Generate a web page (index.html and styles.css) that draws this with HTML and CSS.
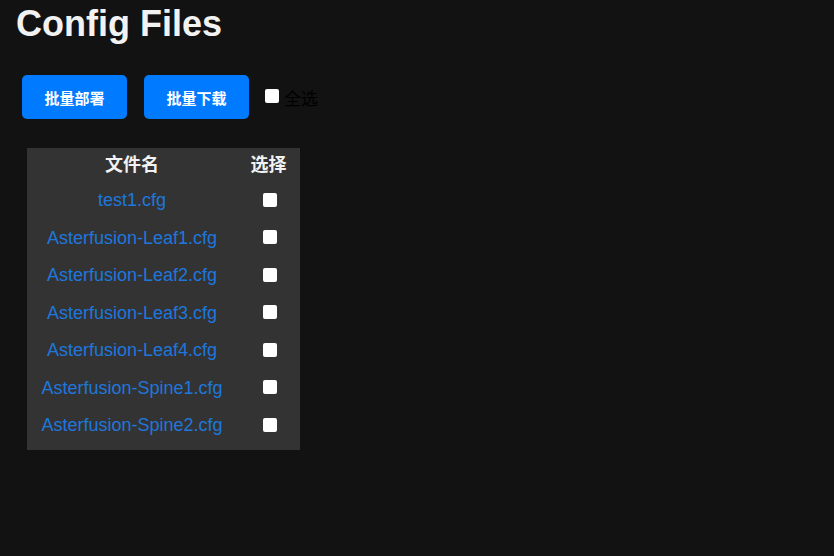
FILE: index.html
```html
<!DOCTYPE html>
<html lang="zh-CN">
<head>
<meta charset="utf-8">
<title>Config Files</title>
<link rel="stylesheet" href="styles.css">
</head>
<body>
<h1 class="title">Config Files</h1>
<div class="toolbar">
  <button class="btn">批量部署</button>
  <button class="btn">批量下载</button>
  <label class="select-all"><input type="checkbox" class="chk"><span>全选</span></label>
</div>
<div class="files-box">
<table class="files">
  <thead>
    <tr><th class="col-name">文件名</th><th class="col-sel">选择</th></tr>
  </thead>
  <tbody>
    <tr><td class="col-name"><a href="#">test1.cfg</a></td><td class="col-sel"><input type="checkbox" class="chk"></td></tr>
    <tr><td class="col-name"><a href="#">Asterfusion-Leaf1.cfg</a></td><td class="col-sel"><input type="checkbox" class="chk"></td></tr>
    <tr><td class="col-name"><a href="#">Asterfusion-Leaf2.cfg</a></td><td class="col-sel"><input type="checkbox" class="chk"></td></tr>
    <tr><td class="col-name"><a href="#">Asterfusion-Leaf3.cfg</a></td><td class="col-sel"><input type="checkbox" class="chk"></td></tr>
    <tr><td class="col-name"><a href="#">Asterfusion-Leaf4.cfg</a></td><td class="col-sel"><input type="checkbox" class="chk"></td></tr>
    <tr><td class="col-name"><a href="#">Asterfusion-Spine1.cfg</a></td><td class="col-sel"><input type="checkbox" class="chk"></td></tr>
    <tr><td class="col-name"><a href="#">Asterfusion-Spine2.cfg</a></td><td class="col-sel"><input type="checkbox" class="chk"></td></tr>
  </tbody>
</table>
</div>
</body>
</html>
```
FILE: styles.css
```css
html, body {
  background: #121212;
}
body {
  margin: 0;
  padding: 0 16px;
  font-family: "Liberation Sans", "Noto Sans CJK SC", Arial, sans-serif;
  color: #000;
}
.title {
  margin: 3px 0 0;
  font-size: 36px;
  font-weight: bold;
  color: #f2f2f2;
  line-height: 41px;
}
.toolbar {
  display: flex;
  align-items: center;
  margin-top: 31px;
  padding-left: 6px;
}
.btn {
  width: 105px;
  height: 44px;
  margin-right: 17px;
  border: none;
  border-radius: 5px;
  background: #007bff;
  color: #fff;
  font-family: "Noto Sans CJK SC", sans-serif;
  font-size: 15px;
  font-weight: bold;
  padding: 0;
}
.btn + .btn {
  margin-right: 16px;
}
.select-all {
  display: flex;
  align-items: center;
  font-family: "Noto Sans CJK SC", sans-serif;
  font-size: 17px;
  color: #000;
  height: 16px;
}
.select-all .chk {
  margin: 0 5px 2px 0;
}
.chk {
  appearance: none;
  -webkit-appearance: none;
  width: 14px;
  height: 14px;
  background: #fff;
  border-radius: 2px;
  margin: 0;
  display: inline-block;
}
.files-box {
  display: inline-block;
  margin: 29px 0 0 11px;
  background: #333;
  padding-bottom: 6px;
}
.files {
  border-collapse: collapse;
  width: 273px;
}
.files th {
  box-sizing: border-box;
  height: 33px;
  padding: 0 0 3px;
  font-family: "Noto Sans CJK SC", sans-serif;
  font-size: 18px;
  font-weight: bold;
  color: #f2f2f2;
  text-align: center;
  vertical-align: middle;
  line-height: 22px;
}
.files td {
  box-sizing: border-box;
  height: 37.5px;
  padding: 0;
  text-align: center;
  vertical-align: middle;
  font-size: 18px;
  line-height: 21px;
}
.files td.col-name {
  padding-top: 2px;
}
.files td .chk {
  display: block;
  margin: 0 auto;
  position: relative;
  left: 1px;
}
.col-name {
  width: 210px;
}
.col-sel {
  width: 63px;
}
.files a {
  color: #1e77dc;
  text-decoration: none;
}
```
